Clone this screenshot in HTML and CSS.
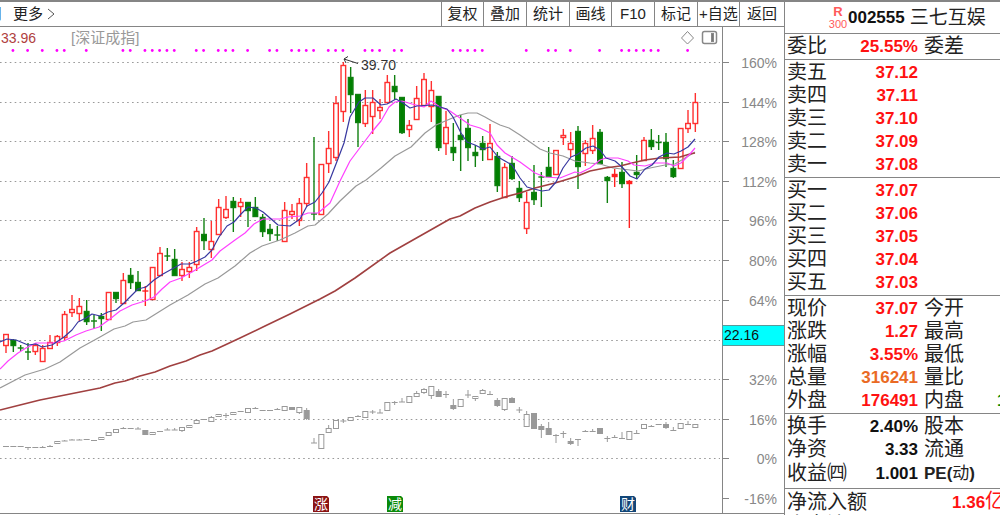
FILE: index.html
```html
<!DOCTYPE html>
<html lang="zh-CN">
<head>
<meta charset="utf-8">
<title>002555 三七互娱</title>
<link rel="stylesheet" href="styles.css">
</head>
<body>
<div class="terminal">
  <main class="left">
    <nav class="toolbar">
      <div class="periods">
        <button class="period">月</button>
        <button class="period">更多
          <svg class="chevron" width="8" height="12" viewBox="0 0 8 12"><path d="M1 1l6 5-6 5" fill="none" stroke="#555"/></svg>
        </button>
      </div>
      <button class="tool tool-narrow">复权</button>
      <button class="tool">叠加</button>
      <button class="tool">统计</button>
      <button class="tool tool-narrow">画线</button>
      <button class="tool">F10</button>
      <button class="tool">标记</button>
      <button class="tool tool-narrow">+自选</button>
      <button class="tool tool-last">返回</button>
    </nav>
    <section class="chart">
      <header class="legend">
        <div class="legend-main">
          <span class="ma">33.96</span>
          <span class="index-name">[深证成指]</span>
          <svg class="legend-icons" width="38" height="16" viewBox="0 0 38 16" fill="none" stroke="#888">
            <path d="M7.500 1.500L13.500 8l-6 6-6-6z"/>
            <rect x="22.500" y="1.500" width="14" height="12" rx="2" stroke-width="1.500"/>
            <rect x="31.500" y="3.500" width="2" height="8" fill="#777"/>
          </svg>
        </div>
      </header>
      <svg id="plot" class="plot" viewBox="0 47 784 466" role="img" aria-label="K线图"></svg>
    </section>
  </main>
  <aside class="quote">
    <h1 class="title">
      <span class="flags"><b>R</b><span>300</span></span>
      <b class="code">002555</b>
      <span class="name">三七互娱</span>
    </h1>
    <table class="data">
      <colgroup><col class="c-label"><col class="c-value"><col class="c-label2"><col></colgroup>
      <tbody>
        <tr><th>委比</th><td class="up">25.55%</td><th class="second">委差</th><td></td></tr>
      </tbody>
      <tbody>
        <tr><th>卖五</th><td class="up">37.12</td><td colspan="2"></td></tr>
        <tr><th>卖四</th><td class="up">37.11</td><td colspan="2"></td></tr>
        <tr><th>卖三</th><td class="up">37.10</td><td colspan="2"></td></tr>
        <tr><th>卖二</th><td class="up">37.09</td><td colspan="2"></td></tr>
        <tr><th>卖一</th><td class="up">37.08</td><td colspan="2"></td></tr>
      </tbody>
      <tbody>
        <tr><th>买一</th><td class="up">37.07</td><td colspan="2"></td></tr>
        <tr><th>买二</th><td class="up">37.06</td><td colspan="2"></td></tr>
        <tr><th>买三</th><td class="up">37.05</td><td colspan="2"></td></tr>
        <tr><th>买四</th><td class="up">37.04</td><td colspan="2"></td></tr>
        <tr><th>买五</th><td class="up">37.03</td><td colspan="2"></td></tr>
      </tbody>
      <tbody>
        <tr><th>现价</th><td class="up">37.07</td><th class="second">今开</th><td></td></tr>
        <tr><th>涨跌</th><td class="up">1.27</td><th class="second">最高</th><td></td></tr>
        <tr><th>涨幅</th><td class="up">3.55%</td><th class="second">最低</th><td></td></tr>
        <tr><th>总量</th><td class="volume">316241</td><th class="second">量比</th><td></td></tr>
        <tr><th>外盘</th><td class="up">176491</td><th class="second">内盘</th><td class="down">1</td></tr>
      </tbody>
      <tbody class="basics">
        <tr><th>换手</th><td>2.40%</td><th class="second">股本</th><td></td></tr>
        <tr><th>净资</th><td>3.33</td><th class="second">流通</th><td></td></tr>
        <tr><th>收益㈣</th><td>1.001</td><th class="second"><b class="pe">PE(</b><span class="pe-kind">动</span><b class="pe">)</b></th><td></td></tr>
      </tbody>
      <tbody>
        <tr><th colspan="2">净流入额</th><td colspan="2" class="up inflow">1.36<span class="unit">亿</span></td></tr>
        <tr><th colspan="2">大宗流入</th><td colspan="2"></td></tr>
      </tbody>
    </table>
  </aside>
</div>
<script src="chart.js"></script>
</body>
</html>
```

FILE: styles.css
```css
* { box-sizing: border-box; }

body {
  margin: 0;
  background: #fff;
  color: #222;
  font-family: "Liberation Sans", "Noto Sans CJK SC", sans-serif;
}

.terminal {
  display: flex;
  height: 100vh;
  overflow: hidden;
  border-top: 2px solid #858585;
}

.left {
  flex: 1;
  min-width: 0;
}

.toolbar {
  display: flex;
  height: 25px;
  border-bottom: 1px solid #858585;
}

.periods {
  display: flex;
  flex: 1;
  gap: 10px;
  margin-left: -12px;
}

.period,
.tool {
  padding: 0;
  border: 0;
  background: none;
  color: #222;
  font: 15px/24px "Liberation Sans", "Noto Sans CJK SC", sans-serif;
  white-space: nowrap;
}

.chevron {
  vertical-align: -1px;
}

.tool {
  width: 43px;
  border-left: 1px solid #858585;
}

.tool-narrow { width: 42px; }
.tool-last { width: 45px; }

.legend {
  height: 20px;
  padding-right: 61px;
}

.legend-main {
  display: flex;
  align-items: center;
  height: 20px;
  padding: 2px 4px 0 1px;
  border-right: 1px solid #858585;
}

.ma {
  width: 70px;
  color: #b04040;
  font-size: 14px;
}

.index-name {
  flex: 1;
  color: #999;
  font-size: 15px;
  line-height: 18px;
}

.plot {
  display: block;
  width: 100%;
  height: auto;
  border-bottom: 1px solid #858585;
}

.grid { stroke: #999; stroke-dasharray: 1.6 3.29; stroke-width: 1.2; }
.axis { stroke: #858585; fill: none; }
.tick-label { fill: #888; font-size: 14px; text-anchor: end; }
.tag { fill: #0ff; stroke: #5a9a9a; }
.tag-label { fill: #111; font-size: 14px; }
.rise { stroke: #ff3030; fill: #fff; stroke-width: 1.4; }
.rise-flat { stroke: #ff2020; fill: #ff2020; stroke-width: 1.4; }
.fall { stroke: #108010; fill: #008000; stroke-width: 1.4; }
.bench { stroke: #999; fill: #fff; }
.bench-solid { stroke: #999; fill: #999; }
.line { fill: none; stroke-width: 1.2; stroke-linejoin: round; }
.line-navy { stroke: #3838a0; }
.line-pink { stroke: #ff40ff; }
.line-grey { stroke: #999; }
.line-brown { stroke: #a04040; stroke-width: 1.6; }
.dot { fill: #f0f; }
.peak { stroke: #333; fill: none; }
.peak-label { fill: #333; font-size: 14px; }
.event-label { fill: #fff; font-size: 14px; text-anchor: middle; }

.quote {
  width: 216px;
  overflow: hidden;
  border-left: 1px solid #858585;
}

.title {
  display: flex;
  align-items: center;
  height: 31px;
  margin: 0;
  padding-left: 43px;
  font-weight: 400;
  white-space: nowrap;
}

.flags {
  display: flex;
  flex-direction: column;
  width: 20px;
  color: #ff5a5a;
  font-size: 11px;
  line-height: 12px;
  text-align: center;
}

.flags b { font-size: 13px; }

.code {
  color: #111;
  font-size: 17px;
}

.name {
  padding-left: 5px;
  font-size: 19px;
  line-height: 30px;
}

.data {
  width: 100%;
  table-layout: fixed;
  border-spacing: 0;
  border-collapse: collapse;
}

.c-label { width: 63px; }
.c-value { width: 70px; }
.c-label2 { width: 79px; }

.data tbody { border-top: 1px solid #858585; }

.data th,
.data td {
  height: 23px;
  padding: 0;
  overflow: hidden;
  line-height: 23px;
  white-space: nowrap;
}

.data tr:first-child > * { padding-top: 1px; }
.data tr:last-child > * { padding-bottom: 1px; }
.data .basics tr:last-child > * { padding-bottom: 3px; }

.data th {
  padding-left: 2px;
  font-size: 20px;
  font-weight: 400;
  text-align: left;
}

.data td {
  color: #111;
  font-size: 17px;
  font-weight: 700;
  text-align: right;
}

.data .second { padding-left: 6px; }
.data .up { color: #f11; }
.data .down { color: #080; text-align: left; }
.data .volume { color: #ea6a24; }

.data .inflow {
  padding-left: 34px;
  text-align: left;
}

.unit {
  font-size: 20px;
  font-weight: 400;
}

.pe { font-size: 17px; }
.pe-kind { font-size: 17px; }
```

FILE: chart.js
```js
const plot = document.getElementById("plot");
const STEP = 22 / 3;
const X0 = 6;
const AXIS_X = 722.5;

function add(tag, attrs, text) {
  const el = document.createElementNS("http://www.w3.org/2000/svg", tag);
  for (const key in attrs) el.setAttribute(key, attrs[key]);
  if (text) el.textContent = text;
  plot.appendChild(el);
}

// Percent scale
[[62, "160%"], [102, "144%"], [141, "128%"], [181, "112%"], [220, "96%"], [260, "80%"],
 [300, "64%"], [340, ""], [379, "32%"], [419, "16%"], [458, "0%"], [498, "-16%"]].forEach(([y, label]) => {
  if (y < 498) add("line", { class: "grid", x1: 0, x2: 720, y1: y + 0.5, y2: y + 0.5 });
  add("line", { class: "axis", x1: AXIS_X, x2: 729, y1: y + 0.5, y2: y + 0.5 });
  add("text", { class: "tick-label", x: 777, y: y + 6 }, label);
});
add("line", { class: "axis", x1: AXIS_X, x2: AXIS_X, y1: 47, y2: 513 });
add("rect", { class: "tag", x: AXIS_X, y: 325.5, width: 62, height: 20 });
add("text", { class: "tag-label", x: 724, y: 340 }, "22.16");

// Signal dots
[1, 3, 5, 7, 8, 11, 16, 17, 19, 20, 21, 22, 23, 26, 27, 29, 30, 31, 33, 36, 37, 39, 40, 41, 42, 44, 45, 46,
 49, 50, 51, 53, 54, 61, 62, 63, 64, 65, 71, 74, 75, 77, 81, 84, 85, 86, 87, 88, 89, 93].forEach(i => {
  add("circle", { class: "dot", cx: X0 + i * STEP - 0.4, cy: 50.5, r: 1.4 });
});

// kind, high, body top, body bottom, low
const candles = `R334,334,345,353 G339,340,345,352 G345,347,348,351 G343,351,352,360 R344,345,351,355
R345,348,361,361 R335,342,348,348 R335,336,342,346 R311,314,337,341 R295,309,312,317 R298,306,313,321
G300,311,321,325 G315,320,321,329 G313,316,318,331 R292,292,319,319 G292,292,298,303 R273,280,303,303
G268,275,282,289 G271,282,290,291 F286,290,291,306 R267,267,299,299 R247,253,275,275 G248,255,256,261
G249,259,275,276 R262,269,275,281 R262,267,271,278 R227,231,264,271 G218,234,240,250 R221,241,249,258
R199,207,234,235 R196,209,217,219 G197,201,207,232 R198,202,206,217 G202,202,210,227 G197,207,216,217
G214,217,231,237 G224,229,233,241 G226,234,235,241 R202,210,241,241 R204,211,214,219 R198,203,220,226
R163,177,203,207 G137,213,214,220 R164,164,214,214 R131,148,163,173 R96,103,157,161 R62,65,111,122
G67,77,94,113 G94,94,122,147 R90,105,123,127 R90,102,116,134 R99,107,110,119 R75,82,102,102
G75,86,91,100 G97,97,132,134 R120,125,129,137 R86,98,119,119 R73,79,105,105 R81,90,106,122
G96,96,147,151 R111,127,143,155 G123,147,152,161 G115,135,139,171 G119,128,147,161 G145,152,155,167
G136,143,149,161 R124,143,159,159 G152,156,185,192 R163,167,197,197 G156,163,178,180 G181,188,197,202
R192,202,228,234 G165,192,199,205 G172,176,177,207 G147,167,176,176 R150,150,174,174 R129,135,137,145
R132,143,149,157 G126,131,166,189 R140,143,153,166 R125,138,150,154 G129,132,163,164 G176,177,180,203
F169,174,176,187 G162,172,183,188 F180,181,183,228 G155,172,174,179 R137,140,160,160 G129,140,146,150
G135,142,142,150 G133,142,158,167 G160,168,176,178 R128,128,168,168 R110,123,128,133 R93,102,123,132`;

const benchmark = `S446,446,446,446 S446,446,446,446 S446,446,446,446 S447,447,447,450 S447,447,447,447
S446,447,447,448 S445,446,446,447 B441,441,443,443 S440,440,441,441 S439,439,440,440 S439,439,440,440
S439,439,439,440 S440,440,440,440 B437,437,439,439 B432,432,435,435 B429,429,432,432 S427,428,428,428
S428,428,428,428 S427,428,429,429 S430,430,434,434 B432,432,434,434 S431,431,431,431 S428,429,430,430
S428,429,430,430 B427,427,430,432 B425,425,427,427 B420,420,423,423 S419,419,419,419 B416,417,421,421
B414,414,416,416 S413,415,415,418 B412,412,414,414 S411,411,411,412 B408,408,412,412 S407,408,408,408
S410,410,410,411 S410,410,410,410 S408,409,409,409 B406,406,410,410 S407,407,409,409 B407,407,412,414
S408,410,418,420 S438,442,443,443 B434,434,448,448 B425,428,432,432 B420,420,428,429 S419,420,421,423
B417,417,420,420 S415,416,416,416 B411,411,417,417 S410,411,412,414 S409,412,413,413 B402,402,410,410
S401,402,402,405 S398,401,402,402 B396,396,402,402 B391,393,396,396 B388,389,392,394 B386,386,395,399
S389,391,396,397 S391,394,394,398 S399,405,408,410 B399,399,406,406 S390,394,395,398 B396,396,398,401
B389,390,393,394 S391,394,394,394 S398,400,405,407 B398,398,409,411 S397,398,402,402 S407,409,410,413
B411,414,426,426 S413,413,428,429 S424,426,429,438 S422,428,434,434 S434,435,435,443 S431,433,433,438
S438,441,443,445 S439,439,439,446 S430,431,431,431 S429,431,431,431 S428,428,433,433 S436,438,438,442
S435,437,437,438 S432,438,438,438 B431,431,439,439 S430,433,433,433 B424,424,428,428 S425,426,426,426
S424,424,424,424 S422,424,427,429 S427,430,430,431 B423,423,428,428 S421,424,424,424 B424,424,427,427`;

const CLASSES = { R: "rise", G: "fall", F: "rise-flat", B: "bench", S: "bench-solid" };

function drawCandles(source, bodyWidth) {
  source.split(/\s+/).forEach((entry, i) => {
    const cls = CLASSES[entry[0]];
    const [high, top, bottom, low] = entry.slice(1).split(",").map(Number);
    const x = X0 + i * STEP;
    if (high < low) add("line", { class: cls, x1: x, x2: x, y1: high, y2: low });
    if (bottom - top < 2) {
      const y = (top + bottom) / 2 + 0.5;
      add("line", { class: cls, x1: x - 3, x2: x + 3, y1: y, y2: y });
    } else {
      add("rect", { class: cls, x: x - bodyWidth / 2, y: top + 0.5, width: bodyWidth, height: bottom - top });
    }
  });
}

drawCandles(benchmark, 5);
drawCandles(candles, 4.6);

// Moving averages
const averages = {
  grey: "0,388 25,375 45,369 60,362 80,348 100,337 114,329 125,326 133,322 146,320 154,315 170,305 188,295 205,284 218,278 235,266 250,253 262,246 280,240 295,233 308,226 315,225 328,214 340,201 356,186 366,180 381,168 395,156 411,147 425,133 436,125 450,119 460,115 468,113 477,113 485,117 492,121 500,125 509,128 520,135 530,142 540,149 550,153 563,156 575,161 590,163 600,164 613,168 630,170 638,171 650,168 665,165 675,164 685,158 695,152",
  brown: "0,410 20,405 40,400 60,396 80,392 100,388 115,383 125,381 140,376 155,372 170,366 186,361 200,355 212,351 225,345 240,338 265,326 290,314 320,299 335,291 355,278 390,253 420,236 450,219 460,216 475,208 490,202 505,197 520,193 535,188 555,183 575,177 590,171 605,168 620,166 632,163 645,160 660,158 680,157 690,154 695,153",
  pink: "0,369 8,361 18,353 26,348 36,343 52,343 64,341 76,335 86,331 99,327 110,319 120,311 132,305 145,301 154,297 162,289 170,282 181,278 192,272 202,266 212,260 220,251 235,240 245,233 254,224 263,219 280,219 288,217 300,216 308,213 318,213 330,203 340,181 350,161 365,141 371,133 381,121 389,107 395,102 402,101 412,104 424,107 431,101 440,107 450,111 460,118 470,125 480,128 490,133 497,145 505,153 520,162 535,173 545,177 560,178 575,172 580,173 590,168 600,160 606,158 618,158 628,161 634,165 645,166 655,163 667,163 674,166 681,163 690,154 695,148",
  navy: "0,342 7,339 16,340 28,345 36,344 42,347 52,345 64,337 72,330 78,322 86,318 92,314 100,316 108,312 116,310 124,303 132,295 138,289 146,287 154,280 163,274 172,269 181,264 190,264 197,261 205,257 212,250 219,237 227,226 234,222 241,214 248,207 256,208 263,212 270,218 278,225 290,226 300,219 307,206 315,202 322,193 329,182 336,164 344,143 350,117 359,102 365,98 373,98 381,105 387,104 396,99 403,103 410,108 417,106 432,105 440,107 447,109 453,117 461,133 467,142 475,145 483,149 490,147 498,157 505,161 512,165 520,178 527,187 534,189 542,191 549,190 556,182 563,168 571,157 578,154 586,148 593,146 600,150 606,158 615,161 622,167 630,176 637,179 645,169 652,165 659,157 667,153 674,154 681,151 688,147 695,139"
};
for (const name in averages) add("polyline", { class: "line line-" + name, points: averages[name] });

// Peak price
add("path", { class: "peak", d: "M358 63.500L344 59M348 56.500L344 59L346 63" });
add("text", { class: "peak-label", x: 361, y: 70 }, "39.70");

// Event markers
[[313, "涨", "#8b1414"], [387, "减", "#0a8a0a"], [620, "财", "#124678"]].forEach(([x, label, color]) => {
  add("path", { d: `M${x} 496h14l2 2v14h-16z`, fill: color });
  add("text", { class: "event-label", x: x + 8, y: 509 }, label);
});
```
